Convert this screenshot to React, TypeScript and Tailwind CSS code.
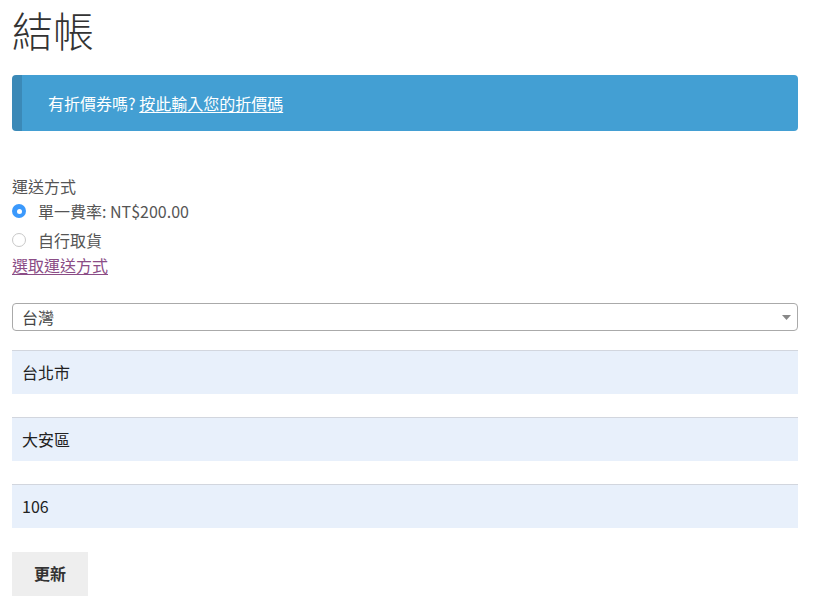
const FONT = { fontFamily: '"Noto Sans CJK TC", "Open Sans", sans-serif' };

export default function App() {
  return (
    <div className="min-h-screen bg-white text-[#555] pl-3 pr-5" style={FONT}>
      {/* Title */}
      <h1 className="text-[41px] font-light leading-none text-[#333] pt-[9px]">結帳</h1>

      {/* Coupon notice */}
      <div className="mt-[25px] h-[56px] flex items-center bg-[#439fd3] border-l-[10px] border-[#3b89b7] rounded-sm pl-[26px] text-white text-[16px]">
        <span>
          有折價券嗎?{" "}
          <a href="#" className="underline underline-offset-2">
            按此輸入您的折價碼
          </a>
        </span>
      </div>

      {/* Shipping */}
      <div className="mt-[43px] text-[16px]">
        <div className="leading-[24px]">運送方式</div>
        <label className="flex items-center gap-[12px] h-[26px]">
          <span className="w-[14px] h-[14px] rounded-full bg-[#3b99fc] flex items-center justify-center">
            <span className="w-[5px] h-[5px] rounded-full bg-white" />
          </span>
          <span>單一費率: NT$200.00</span>
        </label>
        <label className="flex items-center gap-[12px] h-[31px]">
          <span className="w-[14px] h-[14px] rounded-full border border-[#c8c8c8] bg-white" />
          <span>自行取貨</span>
        </label>
        <a href="#" className="block leading-[20px] text-[#8b4d86] underline underline-offset-2">
          選取運送方式
        </a>
      </div>

      {/* Address form */}
      <div className="mt-[28px] flex flex-col">
        <div className="h-[28px] flex items-center justify-between border border-[#aaa] rounded-[4px] pl-[9px] pr-[6px] text-[16px] text-[#444]">
          <span>台灣</span>
          <svg width="9" height="5" viewBox="0 0 9 5">
            <path d="M0 0h9L4.5 5z" fill="#888" />
          </svg>
        </div>
        <div className="mt-[19px] h-[44px] flex items-center bg-[#e8f0fb] border-t border-[#d2d6de] pl-[10px] pb-[2px] text-[16px] text-[#222]">
          台北市
        </div>
        <div className="mt-[23px] h-[44px] flex items-center bg-[#e8f0fb] border-t border-[#d2d6de] pl-[10px] pb-[2px] text-[16px] text-[#222]">
          大安區
        </div>
        <div className="mt-[23px] h-[44px] flex items-center bg-[#e8f0fb] border-t border-[#d2d6de] pl-[10px] pb-[2px] text-[16px] text-[#222]">
          106
        </div>
        <div className="mt-[24px]">
          <button className="w-[76px] h-[44px] pb-[2px] bg-[#eeeeee] text-[16px] font-bold text-[#333]">
            更新
          </button>
        </div>
      </div>
    </div>
  );
}
